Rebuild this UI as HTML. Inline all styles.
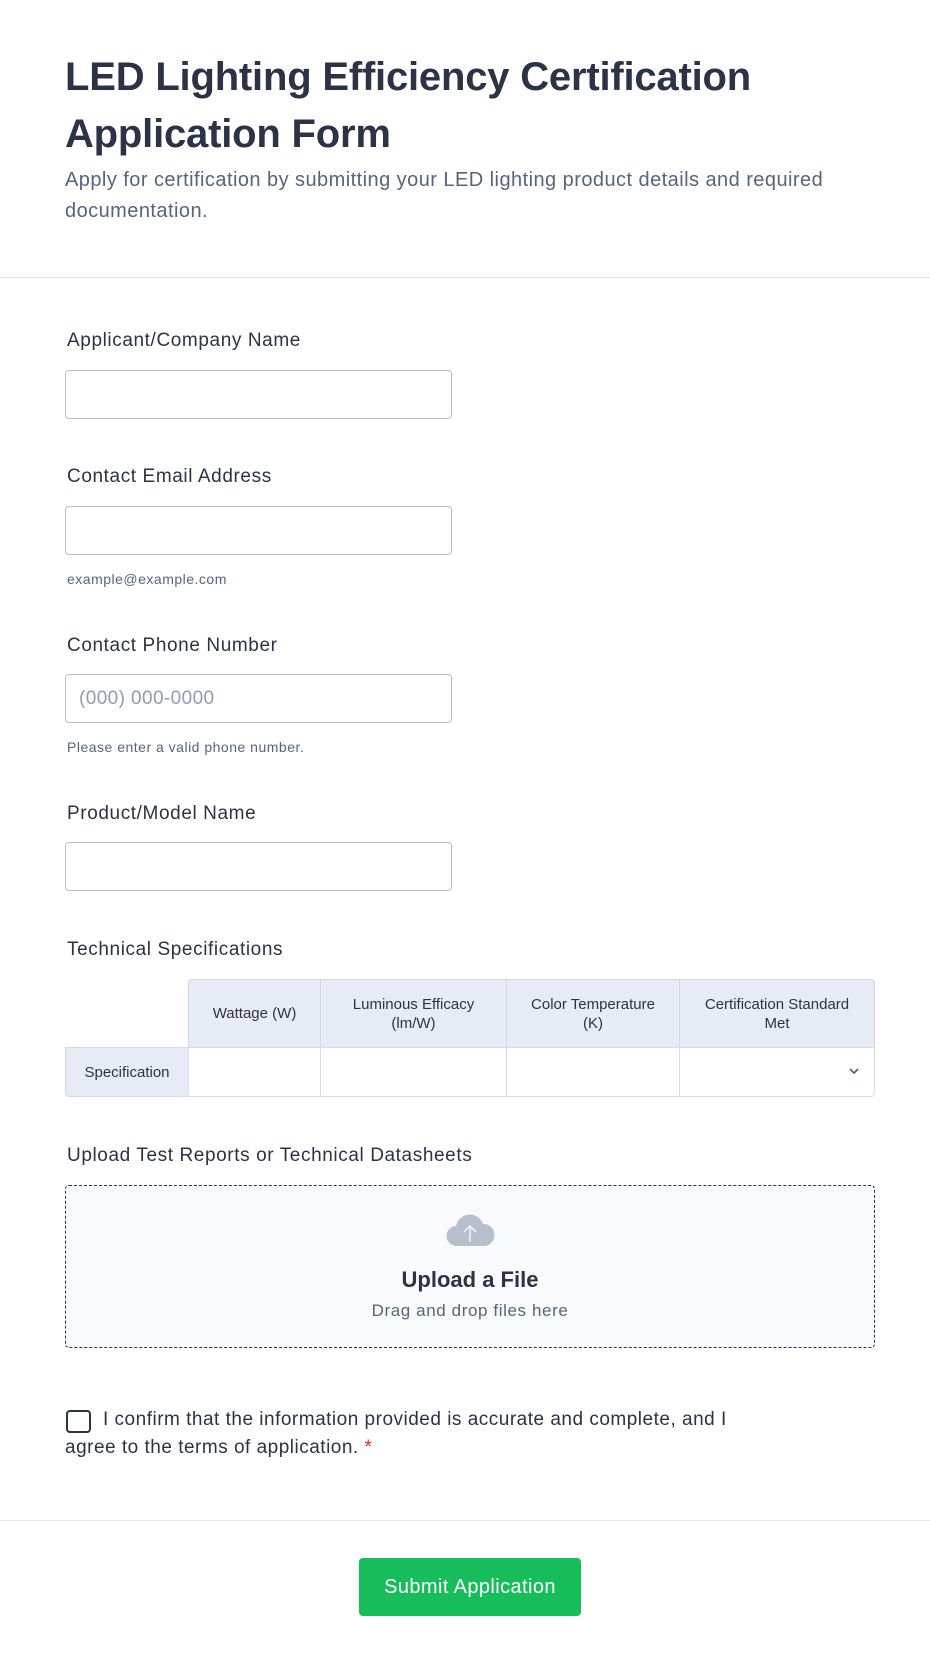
<!DOCTYPE html>
<html><head><meta charset="utf-8"><style>
*{margin:0;padding:0;box-sizing:border-box}
body{width:930px;height:1666px;background:#fff;font-family:"Liberation Sans",sans-serif;color:#2c3345;position:relative;overflow:hidden}
.a{position:absolute}
h1{position:absolute;left:65px;top:49px;font-size:40px;line-height:57px;font-weight:bold;color:#2c3345;letter-spacing:-0.2px}
.sub{left:65px;top:165px;font-size:20px;line-height:31px;color:#57647e;width:820px;letter-spacing:0.45px}
.hr{left:0;width:930px;height:1px;background:#e3e5ea}
.lbl{left:67px;font-size:19px;color:#2c3345;transform:translateY(-50%);letter-spacing:0.6px}
.inp{left:65px;width:387px;height:49px;border:1px solid #b8bdc9;border-radius:4px;background:#fff}
.hint{left:67px;font-size:14px;color:#57647e;transform:translateY(-50%);letter-spacing:0.5px}
.th{background:#e6ebf5;border:1px solid #d3d8e3;font-size:15px;color:#2c3345;display:flex;align-items:center;justify-content:center;text-align:center;line-height:19px}
.td{border:1px solid #d8dce5;background:#fff}
</style></head><body>
<h1>LED Lighting Efficiency Certification<br>Application Form</h1>
<div class="a sub">Apply for certification by submitting your LED lighting product details and required documentation.</div>
<div class="a hr" style="top:277px"></div>

<div class="a lbl" style="top:341px">Applicant/Company Name</div>
<div class="a inp" style="top:370px"></div>
<div class="a lbl" style="top:477px">Contact Email Address</div>
<div class="a inp" style="top:506px"></div>
<div class="a hint" style="top:579px">example@example.com</div>
<div class="a lbl" style="top:646px">Contact Phone Number</div>
<div class="a inp" style="top:674px;padding-left:13px;line-height:47px;font-size:19px;color:#8f9bb3;letter-spacing:0.4px">(000) 000-0000</div>
<div class="a hint" style="top:747px">Please enter a valid phone number.</div>
<div class="a lbl" style="top:814px">Product/Model Name</div>
<div class="a inp" style="top:842px"></div>

<div class="a lbl" style="top:950px">Technical Specifications</div>
<div class="a th" style="left:188px;top:979px;width:133px;height:69px;border-top-left-radius:4px">Wattage (W)</div>
<div class="a th" style="left:320px;top:979px;width:187px;height:69px">Luminous Efficacy<br>(lm/W)</div>
<div class="a th" style="left:506px;top:979px;width:174px;height:69px">Color Temperature<br>(K)</div>
<div class="a th" style="left:679px;top:979px;width:196px;height:69px;border-top-right-radius:4px">Certification Standard<br>Met</div>
<div class="a th" style="left:65px;top:1047px;width:124px;height:50px;border-bottom-left-radius:4px">Specification</div>
<div class="a td" style="left:188px;top:1047px;width:133px;height:50px"></div>
<div class="a td" style="left:320px;top:1047px;width:187px;height:50px"></div>
<div class="a td" style="left:506px;top:1047px;width:174px;height:50px"></div>
<div class="a td" style="left:679px;top:1047px;width:196px;height:50px;border-bottom-right-radius:4px"></div>
<svg class="a" style="left:848px;top:1066px" width="12" height="10" viewBox="0 0 12 10"><path d="M2 3l4 4 4-4" fill="none" stroke="#57647e" stroke-width="1.8"/></svg>

<div class="a lbl" style="top:1156px">Upload Test Reports or Technical Datasheets</div>
<div class="a" style="left:65px;top:1185px;width:810px;height:163px;border:1px dashed #2c3345;border-radius:4px;background:#f9fafd"></div>
<svg class="a" style="left:445px;top:1210px" width="50" height="40" viewBox="0 0 50 40"><path d="M12 36a10 10 0 0 1-1-20 14 14 0 0 1 27-2 11 11 0 0 1 1 22z" fill="#b8bfcc"/><path d="M25 32V16M19 22l6-6 6 6" fill="none" stroke="#f3f5f9" stroke-width="1.5"/></svg>
<div class="a" style="left:65px;width:810px;top:1267px;text-align:center;font-size:22px;font-weight:bold;color:#2c3345">Upload a File</div>
<div class="a" style="left:65px;width:810px;top:1301px;text-align:center;font-size:17px;color:#57647e;letter-spacing:0.6px">Drag and drop files here</div>

<div class="a" style="left:66px;top:1410px;width:25px;height:23px;border:2px solid #2c3345;border-radius:4px"></div>
<div class="a" style="left:65px;top:1406px;font-size:19px;line-height:28px;color:#2c3345;width:730px;text-indent:38px;letter-spacing:0.5px">I confirm that the information provided is accurate and complete, and I<br>agree to the terms of application. <span style="color:#e5281f">*</span></div>

<div class="a hr" style="top:1520px"></div>
<div class="a" style="left:359px;top:1558px;width:222px;height:58px;background:#18bd5b;border-radius:4px;color:#fff;font-size:20px;text-align:center;line-height:58px;letter-spacing:0.4px">Submit Application</div>
</body></html>
